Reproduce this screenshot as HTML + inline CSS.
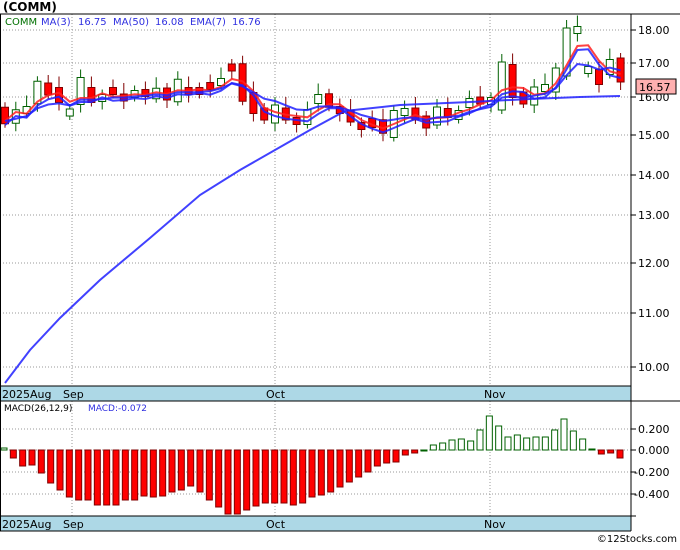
<!DOCTYPE html>
<html><head><meta charset="utf-8"><style>
body{margin:0;background:#fff;width:680px;height:546px;overflow:hidden;font-family:"DejaVu Sans","Liberation Sans",sans-serif}
svg text{font-family:"DejaVu Sans","Liberation Sans",sans-serif}
</style></head><body>
<svg id="s" width="680" height="546" xmlns="http://www.w3.org/2000/svg">
<rect width="680" height="546" fill="#fff"/>
<text x="3" y="11" font-size="12" font-weight="bold" fill="#000">(COMM)</text>
<g id="grid" stroke="#999" stroke-dasharray="1,2" stroke-width="1"></g>
<rect x="0" y="386" width="631" height="15" fill="#add8e6"/>
<rect x="0" y="516" width="631" height="15" fill="#add8e6"/>
<g id="c"></g>
<line x1="0" y1="14" x2="680" y2="14" stroke="#000"/>
<line x1="0" y1="386" x2="631" y2="386" stroke="#000"/>
<line x1="0" y1="401" x2="680" y2="401" stroke="#000"/>
<line x1="0" y1="516" x2="631" y2="516" stroke="#000"/>
<line x1="0" y1="531" x2="631" y2="531" stroke="#000"/>
<line x1="631" y1="14" x2="631" y2="531" stroke="#000"/>
<line x1="0.5" y1="14" x2="0.5" y2="531" stroke="#000"/>
<g font-size="11" fill="#000">
<text x="2" y="398">2025Aug</text><text x="63" y="398">Sep</text><text x="266" y="398">Oct</text><text x="484" y="398">Nov</text>
<text x="2" y="528">2025Aug</text><text x="63" y="528">Sep</text><text x="266" y="528">Oct</text><text x="484" y="528">Nov</text>
<text x="638" y="34">18.00</text><text x="638" y="67">17.00</text><text x="638" y="101">16.00</text><text x="638" y="139">15.00</text>
<text x="638" y="179">14.00</text><text x="638" y="219">13.00</text><text x="638" y="267">12.00</text><text x="638" y="317">11.00</text><text x="638" y="371">10.00</text>
<text x="638" y="433">0.200</text><text x="638" y="454">0.000</text><text x="634" y="476">-0.200</text><text x="634" y="498">-0.400</text>
</g>
<rect x="636" y="79" width="40" height="15" fill="#ffb0b0" stroke="#000"/>
<text x="639" y="91" font-size="11">16.57</text>
<g font-size="10">
<text x="5" y="25" fill="#007000">COMM</text><text x="41" y="25" fill="#3030e0">MA(3)</text><text x="78" y="25" fill="#3030e0">16.75</text>
<text x="113" y="25" fill="#3030e0">MA(50)</text><text x="155" y="25" fill="#3030e0">16.08</text><text x="190" y="25" fill="#3030e0">EMA(7)</text><text x="232" y="25" fill="#3030e0">16.76</text>
</g>
<g font-size="9">
<text x="4" y="411" fill="#000">MACD(26,12,9)</text><text x="88" y="411" fill="#3030e0">MACD:-0.072</text>
</g>
<text x="677" y="542" font-size="10" text-anchor="end" fill="#000">©12Stocks.com</text>
</svg>
<script>
(function(){
var NS="http://www.w3.org/2000/svg",c=document.getElementById('c'),g=document.getElementById('grid');
function el(t,a,p){var e=document.createElementNS(NS,t);for(var k in a)e.setAttribute(k,a[k]);(p||c).appendChild(e);return e;}
[30,63,97,135,175,215,263,313,367].forEach(function(y){el('line',{x1:0,y1:y,x2:631,y2:y},g)});
[429,450,472,494].forEach(function(y){el('line',{x1:0,y1:y,x2:631,y2:y},g)});
[72,275,490].forEach(function(x){el('line',{x1:x,y1:14,x2:x,y2:516},g)});
[30,63,97,135,175,215,263,313,367,429,450,472,494,516].forEach(function(y){el('line',{x1:631,y1:y,x2:636,y2:y,stroke:'#000'})});
var cl=[121,112,108,85,93,100,112,82,100,98,92,98,93,94,90,98,83,92,92,88,80,69,95,110,118,108,118,122,112,96,105,112,120,128,126,131,115,112,118,126,110,116,112,100,101,100,70,92,102,90,88,72,36,30,70,82,62,78];
var op=[110,121,112,100,85,90,113,100,90,98,90,97,95,92,97,90,98,90,90,84,84,66,70,96,110,120,110,120,122,102,96,108,112,124,120,122,133,112,110,118,122,110,118,106,100,102,102,70,94,102,88,88,68,30,70,72,72,62];
var n=cl.length,dx=10.8;
for(var i=0;i<n;i++){var x=5+i*dx,o=op[i],cc=cl[i],dn=cc>o,tp=Math.min(o,cc),bt=Math.max(o,cc),col=dn?'#800000':'#006000';
var mid=(tp+bt)/2,hh=Math.max(7,(bt-tp)*1.5)/2;tp=mid-hh;bt=mid+hh;
el('line',{x1:x,y1:tp-5-(i%3)*3,x2:x,y2:bt+4+(i%2)*4,stroke:col});
el('rect',{x:x-3.5,y:tp,width:7,height:bt-tp,fill:dn?'#ff0000':'#fff',stroke:col});}
function line(pts,col){el('polyline',{points:pts.join(' '),fill:'none',stroke:col,'stroke-width':2,'stroke-opacity':0.85});}
var m3=[],e7=[],m3b=[],e=cl[0];
for(var i=0;i<n;i++){var a=i<2?cl[i]:(cl[i]+cl[i-1]+cl[i-2])/3;var X=(5+i*dx).toFixed(1);m3.push(X+','+a.toFixed(1));m3b.push(X+','+(a+4).toFixed(1));e=i?e+(cl[i]-e)*0.25:e;e7.push(X+','+e.toFixed(1));}
line(m3,'#ff2020');line(e7,'#2020ff');line(m3b,'#2020ff');
line(['5,383','30,350','60,318','100,280','150,238','200,195','240,170','275,150','310,130','345,111','400,105','470,102','530,99','580,97','620,96'],'#2020ff');
var h=[2,-8,-16,-15,-23,-33,-40,-47,-50,-50,-55,-55,-55,-50,-50,-46,-47,-46,-42,-40,-36,-42,-50,-57,-64,-64,-60,-56,-53,-53,-53,-55,-53,-47,-45,-42,-37,-32,-27,-22,-16,-13,-12,-5,-3,0,5,7,10,11,9,20,34,24,13,15,12,13,13,20,31,19,11,1,-4,-3,-8];
var m=h.length;
for(var i=0;i<m;i++){var x=4+i*(616/(m-1)),v=h[i],col=v>=0?'#006000':'#800000';
if(v>=0)el('rect',{x:x-3,y:450-v,width:6,height:Math.max(1,v),fill:'#fff',stroke:col});
else el('rect',{x:x-3,y:450,width:6,height:-v,fill:'#ff0000',stroke:col});}
})();
</script>
</body></html>
